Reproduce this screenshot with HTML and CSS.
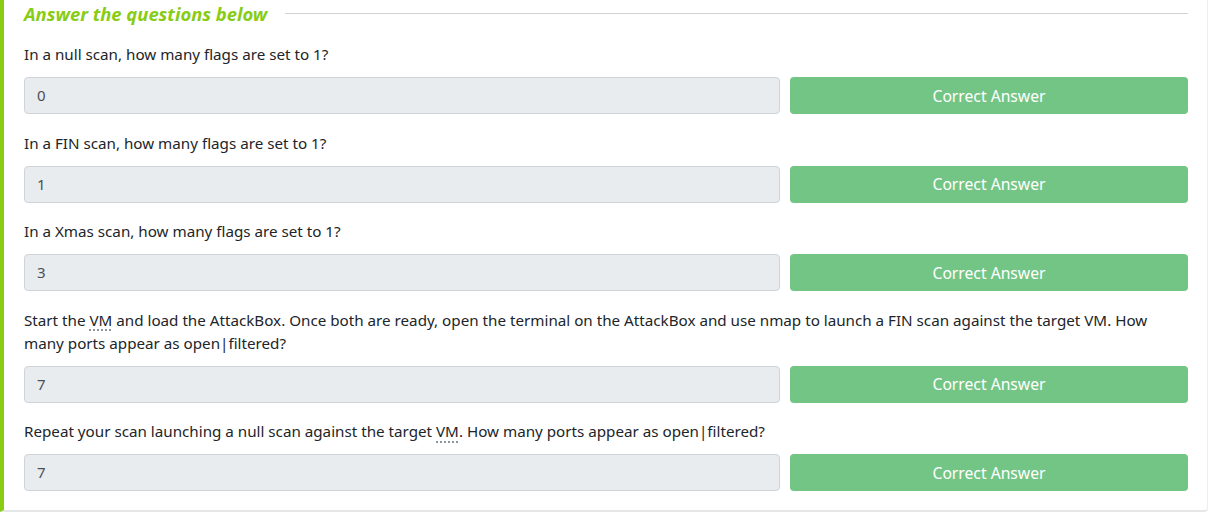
FILE: index.html
```html
<!DOCTYPE html>
<html>
<head>
<meta charset="utf-8">
<link rel="stylesheet" href="styles.css">
</head>
<body>
<div class="card">
  <div class="heading">
    <span class="heading-text">Answer the questions below</span>
    <span class="heading-line"></span>
  </div>
  <div class="question first">
    <p class="q">In a null scan, how many flags are set to 1?</p>
    <div class="row"><div class="answer">0</div><button class="btn">Correct Answer</button></div>
  </div>
  <div class="question">
    <p class="q">In a FIN scan, how many flags are set to 1?</p>
    <div class="row"><div class="answer">1</div><button class="btn">Correct Answer</button></div>
  </div>
  <div class="question">
    <p class="q">In a Xmas scan, how many flags are set to 1?</p>
    <div class="row"><div class="answer">3</div><button class="btn">Correct Answer</button></div>
  </div>
  <div class="question">
    <p class="q">Start the <abbr>VM</abbr> and load the AttackBox. Once both are ready, open the terminal on the AttackBox and use nmap to launch a FIN scan against the target VM. How many ports appear as open|filtered?</p>
    <div class="row"><div class="answer">7</div><button class="btn">Correct Answer</button></div>
  </div>
  <div class="question">
    <p class="q">Repeat your scan launching a null scan against the target <abbr>VM</abbr>. How many ports appear as open|filtered?</p>
    <div class="row"><div class="answer">7</div><button class="btn">Correct Answer</button></div>
  </div>
</div>
</body>
</html>
```
FILE: styles.css
```css
html, body {
  margin: 0;
  padding: 0;
  background: #ffffff;
}
body {
  font-family: "Noto Sans", "Open Sans", sans-serif;
  color: #212529;
  width: 1208px;
  height: 512px;
  overflow: hidden;
}
.card {
  box-sizing: border-box;
  width: 1208px;
  height: 512px;
  border-left: 4px solid #88cc14;
  border-bottom: 2px solid #e4e6e8;
  border-bottom-right-radius: 4px;
  box-shadow: inset -1px 0 0 #eceef0;
  padding: 3px 20px 0 20px;
}
.heading {
  display: flex;
  align-items: center;
  height: 20px;
  gap: 18px;
}
.heading-text {
  font-weight: 700;
  font-style: italic;
  color: #88cc14;
  font-size: 18.4px;
  white-space: nowrap;
}
.heading-line {
  flex: 1;
  height: 1px;
  background: #cfd3d6;
}
.question {
  margin-top: 17.6px;
}
.question.first {
  margin-top: 20px;
}
.q {
  margin: 0 0 11px 0;
  font-size: 15.2px;
  line-height: 23px;
  color: #212529;
}
abbr {
  text-decoration: underline dotted #6c757d;
  text-underline-offset: 4px;
}
.row {
  display: flex;
  gap: 10px;
}
.answer {
  box-sizing: border-box;
  flex: 1;
  height: 37px;
  background: #e9ecef;
  border: 1px solid #ced4da;
  border-radius: 4px;
  padding: 0 12px;
  font-size: 15px;
  line-height: 35px;
  color: #495057;
}
.btn {
  box-sizing: border-box;
  width: 398px;
  height: 37px;
  border: none;
  border-radius: 4px;
  background: #73c586;
  color: #ffffff;
  font-family: inherit;
  font-size: 15.7px;
  padding: 0;
}
```
